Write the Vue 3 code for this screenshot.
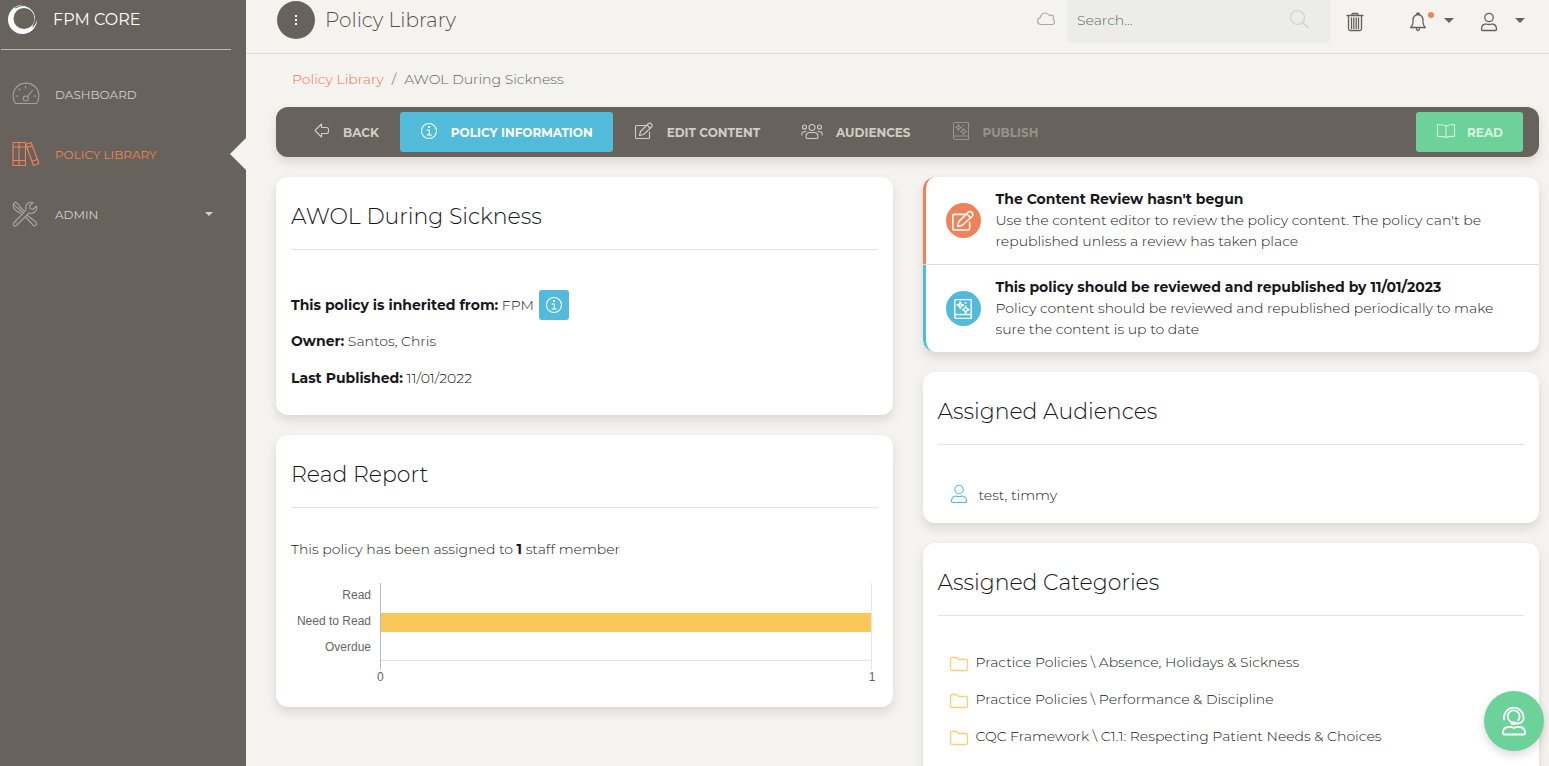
<script setup>
import { h, ref } from 'vue'

const glyphs = {
  gauge: { w: 28, h: 24, d: 'M3.5 21.5C.2 17.500 .5 10.500 3 7C8 -.8 20 -.8 25 7C27.500 10.500 27.800 17.500 24.500 21.500ZM16.300 16.500A2.500 2.500 0 1 1 11.300 16.500A2.500 2.500 0 1 1 16.300 16.500M15.500 14.500L20.500 8.500M13.500 4.200V6M7 7L8 8M4 14H6M22 14H24' },
  books: { w: 28, h: 26, d: 'M1 1.500H13.500V24.500H1ZM7 1.500V24.500M1 6H13.500M1 19.500H13.500M13.800 3.500L19 1.500L27 22.500L21.500 24.500ZM15 6.500L20.500 4.500M19.800 20.500L25.500 18.300' },
  tools: { w: 26, h: 26, d: 'M10.500 11.500L6 7L4.500 6.500L1.500 3L3.500 1L7 4L7.500 5.500L12 10M1.500 3C.5 6 1.500 8 4 9.500L8.500 12.500M15.500 14.500L23.800 21C26 23.500 23 26 21 24L13.500 16M11 12.500L2 21.500C0 24 2.500 26 4.500 24.500L14 15L17 12C22 13.500 25.500 9.500 24.500 5L21 8.500L18 7.500L17.500 5L21 1.500C16 .5 12.500 4 14 9ZM4 22L4.100 22.100' },
  arrow: { w: 16, h: 16, d: 'M1 7.500L7.500 1V4.500H12.500Q14.500 4.500 14.500 6.500V8.500Q14.500 10.500 12.500 10.500H7.500V14Z' },
  info: { w: 18, h: 18, d: 'M16.500 9A7.500 7.500 0 1 1 1.500 9A7.500 7.500 0 1 1 16.500 9M7 8H9.300V13M7 13H11.500M8.500 4.500H9.500V5.500H8.500Z' },
  edit: { w: 20, h: 18, d: 'M12 3.500H2.500Q1.500 3.500 1.500 4.500V15.500Q1.500 16.500 2.500 16.500H14.500Q15.500 16.500 15.500 15.500V10M6.500 9.500L14.500 1.500Q16 .5 17.500 2Q19 3.500 17.500 5L9.500 12.500L5.500 13.500ZM13 3L16.500 6.500' },
  users: { w: 22, h: 16, d: 'M14 4.500A3 3 0 1 1 8 4.500A3 3 0 1 1 14 4.500M6.500 15.500H15.500Q17 15.500 17 14Q17 9.500 13 9.500H9Q5 9.500 5 14Q5 15.500 6.500 15.500ZM5.500 4A2 2 0 1 1 1.500 4A2 2 0 1 1 5.500 4M20.500 4A2 2 0 1 1 16.500 4A2 2 0 1 1 20.500 4M.8 12V11Q.8 8.500 5 8.500M21.200 12V11Q21.200 8.500 17 8.500' },
  book: { w: 18, h: 20, d: 'M16.500 1.500H3Q1.500 1.500 1.500 3V17Q1.500 18.500 3 18.500H16.500ZM1.500 16.500Q1.500 15 3 15H16.500M6.500 3.500L7.300 5.700L9.500 6.500L7.300 7.300L6.500 9.500L5.700 7.300L3.500 6.500L5.700 5.700ZM11.500 7.500L12.500 9.500L14.500 10.500L12.500 11.500L11.500 13.500L10.500 11.500L8.500 10.500L10.500 9.500ZM11 4.500H11.800' },
  open: { w: 20, h: 16, d: 'M10 3Q7 1.500 1.500 1.500V13.500Q7 13 10 14.500Q13 13 18.500 13.500V1.500Q13 1.500 10 3ZM10 3V14.500' },
  cloud: { w: 20, h: 14, d: 'M4.500 12.500H16Q18.500 12.500 18.500 10Q18.500 8 17 7.500Q18 5.500 17.500 4.500Q16 2.500 13.500 3.500Q11.500 .8 8.500 1Q5 1.300 4.500 5.500Q1.500 6 1.500 9Q1.500 12 4.500 12.500Z' },
  search: { w: 20, h: 20, d: 'M15.500 8.500A7 7 0 1 1 1.500 8.500A7 7 0 1 1 15.500 8.500M13.500 13.500L19 18.500' },
  trash: { w: 18, h: 20, d: 'M1 3.500H17M2.500 4V17Q2.500 18.500 4 18.500H14Q15.500 18.500 15.500 17V4M6 3V2Q6 1.500 7 1.500H11Q12 1.500 12 2V3M5.500 6V16.500M7.800 6V16.500M10.200 6V16.500M12.500 6V16.500' },
  bell: { w: 18, h: 20, d: 'M1.500 15.500Q4 14 4 8.500Q4 3 9 2.500Q14 3 14 8.500Q14 14 16.500 15.500ZM7.500 2.500Q7.500 1 9 1Q10.500 1 10.500 2.500M7.500 16.500Q7.500 18.500 9 18.500Q10.500 18.500 10.500 16.500' },
  user: { w: 18, h: 20, d: 'M13.200 5.500A4.200 4.200 0 1 1 4.800 5.500A4.200 4.200 0 1 1 13.200 5.500M2.500 18.500Q1.500 18.500 1.500 17.500Q1.500 12 6 12Q9 13 12 12Q16.500 12 16.500 17.500Q16.500 18.500 15.500 18.500Z' },
  folder: { w: 20, h: 16, d: 'M1.500 3V13Q1.500 14.500 3 14.500H17Q18.500 14.500 18.500 13V5Q18.500 3.500 17 3.500H10L7.500 1.500H3Q1.500 1.500 1.500 3Z' },
  agent: { w: 26, h: 30, d: 'M3 13.500V11.500A9.800 9.800 0 0 1 22.600 11.500Q22.600 17 17 17.500H13.500M9.500 15.500A6 6 0 1 1 17 14.500M10.500 16.500H14V17.800H10.500ZM3.500 28.500H22.500Q24.200 28.500 24.200 26.500Q23.500 21.500 19 21Q15.500 20.500 13 22Q10.500 20.500 7 21Q2.500 21.500 1.800 26.500Q1.800 28.500 3.500 28.500Z' },
}

const Icon = (props) => {
  const g = glyphs[props.name]
  return h('svg', { class: 'icon', width: g.w, height: g.h, viewBox: `0 0 ${g.w} ${g.h}`, 'aria-hidden': 'true' }, [
    h('path', { d: g.d, fill: 'none', stroke: 'currentColor', 'stroke-width': props.weight || 1.1, 'stroke-linejoin': 'round', 'stroke-linecap': 'round' }),
  ])
}
Icon.props = ['name', 'weight']

const query = ref('')

const nav = [
  { icon: 'gauge', label: 'DASHBOARD' },
  { icon: 'books', label: 'POLICY LIBRARY', active: true },
  { icon: 'tools', label: 'ADMIN', menu: true },
]
const actions = [
  { icon: 'arrow', label: 'BACK' },
  { icon: 'info', label: 'POLICY INFORMATION', active: true },
  { icon: 'edit', label: 'EDIT CONTENT' },
  { icon: 'users', label: 'AUDIENCES' },
  { icon: 'book', label: 'PUBLISH', disabled: true },
]
const notices = [
  { tone: 'orange', icon: 'edit', title: "The Content Review hasn't begun", text: "Use the content editor to review the policy content. The policy can't be republished unless a review has taken place" },
  { tone: 'blue', icon: 'book', title: 'This policy should be reviewed and republished by 11/01/2023', text: 'Policy content should be reviewed and republished periodically to make sure the content is up to date' },
]
const report = [
  { label: 'Read', value: 0 },
  { label: 'Need to Read', value: 1 },
  { label: 'Overdue', value: 0 },
]
const categories = [
  'Practice Policies \\ Absence, Holidays & Sickness',
  'Practice Policies \\ Performance & Discipline',
  'CQC Framework \\ C1.1: Respecting Patient Needs & Choices',
  'Practice Policies \\',
]
</script>

<template>
  <div class="shell">
    <aside class="sidebar">
      <div class="brand">
        <svg class="logo" width="32" height="32" viewBox="0 0 32 32" aria-hidden="true">
          <path fill="#fff" fill-rule="evenodd" d="M15 2A14.500 14.500 0 1 0 30 17Q28 23 25 25Q30 17 27 10Q22 3 15 2ZM17 5A10.500 10.500 0 1 1 17 26A10.500 10.500 0 1 1 17 5Z" />
          <path fill="none" stroke="#67625b" stroke-width="1" d="M8 5Q19 -1 26 7Q31 14 26 23" />
        </svg>
        <span>FPM CORE</span>
      </div>
      <nav class="nav">
        <a v-for="n in nav" :key="n.label" href="#" class="nav-item" :class="{ active: n.active }">
          <span class="nav-icon"><Icon :name="n.icon" /></span>
          <span class="nav-label">{{ n.label }}</span>
          <span v-if="n.menu" class="caret"></span>
        </a>
      </nav>
    </aside>

    <div class="page">
      <header class="topbar">
        <button class="more" aria-label="More"><i></i><i></i><i></i></button>
        <h1>Policy Library</h1>
        <Icon name="cloud" class="cloud" />
        <form class="search" @submit.prevent>
          <input v-model="query" type="text" placeholder="Search..." aria-label="Search" />
          <button aria-label="Run search"><Icon name="search" /></button>
        </form>
        <button class="tool trash" aria-label="Recycle bin"><Icon name="trash" weight="1.300" /></button>
        <button class="tool bell" aria-label="Notifications"><Icon name="bell" weight="1.300" /><span class="dot"></span><span class="caret"></span></button>
        <button class="tool account" aria-label="Account"><Icon name="user" weight="1.300" /><span class="caret"></span></button>
      </header>

      <main class="content">
        <nav class="crumbs" aria-label="Breadcrumb">
          <a href="#">Policy Library</a><span>/</span><span>AWOL During Sickness</span>
        </nav>

        <div class="toolbar">
          <button v-for="a in actions" :key="a.label" class="action" :class="{ active: a.active }" :disabled="a.disabled">
            <Icon :name="a.icon" /><span>{{ a.label }}</span>
          </button>
          <button class="action read"><Icon name="open" /><span>READ</span></button>
        </div>

        <div class="columns">
          <div class="column">
            <section class="card">
              <h2>AWOL During Sickness</h2>
              <div class="facts">
                <p class="inherit"><span><strong>This policy is inherited from:</strong> FPM</span>
                  <button class="hint" aria-label="About inheritance"><Icon name="info" /></button></p>
                <p><strong>Owner:</strong> Santos, Chris</p>
                <p><strong>Last Published:</strong> 11/01/2022</p>
              </div>
            </section>
            <section class="card">
              <h2>Read Report</h2>
              <p class="summary">This policy has been assigned to <strong>1</strong> staff member</p>
              <div class="chart">
                <div class="names"><span v-for="r in report" :key="r.label">{{ r.label }}</span></div>
                <div class="plot">
                  <div v-for="r in report" :key="r.label" class="track"><div class="bar" :style="{ width: r.value * 100 + '%' }"></div></div>
                </div>
                <div class="scale"><span>0</span><span>1</span></div>
              </div>
            </section>
          </div>

          <div class="column">
            <section class="notices">
              <article v-for="n in notices" :key="n.icon" class="notice" :class="n.tone">
                <span class="badge"><Icon :name="n.icon" weight="1.300" /></span>
                <p><strong>{{ n.title }}</strong><br />{{ n.text }}</p>
              </article>
            </section>
            <section class="card">
              <h2>Assigned Audiences</h2>
              <ul class="list people"><li><Icon name="user" /><span>test, timmy</span></li></ul>
            </section>
            <section class="card">
              <h2>Assigned Categories</h2>
              <ul class="list folders"><li v-for="c in categories" :key="c"><Icon name="folder" weight="1.300" /><span>{{ c }}</span></li></ul>
            </section>
          </div>
        </div>
      </main>
    </div>
    <button class="support" aria-label="Support"><Icon name="agent" weight="1.800" /></button>
  </div>
</template>

<style>
body { margin: 0; background: #f4f3ef; }
</style>

<style scoped>
* { box-sizing: border-box; }
.shell { display: flex; height: 100vh; overflow: hidden; font: 300 14px/21px Montserrat, Inter, "Open Sans", sans-serif; color: #16181b; background: #f4f3ef; }
button { border: 0; padding: 0; background: none; color: inherit; font: inherit; display: flex; align-items: center; cursor: pointer; }
a { text-decoration: none; color: inherit; }
h1, h2, p, ul { margin: 0; padding: 0; font-weight: 300; }
strong { font-weight: 700; }
.icon { flex: none; display: block; }
.caret { width: 0; height: 0; border: 5px solid transparent; border-top-color: currentColor; border-bottom: 0; }

.sidebar { flex: none; width: 246px; background: #67625b; color: #d4d1ce; }
.brand { display: flex; align-items: center; gap: 14px; height: 50px; margin: 0 15px 0 1px; padding: 0 0 11px 6px; border-bottom: 1px solid #bbb8b3; color: #fff; font-size: 16px; font-weight: 400; }
.nav { padding-top: 14px; }
.nav-item { display: flex; align-items: center; position: relative; height: 60px; padding-left: 12px; padding-right: 33px; font-size: 12px; font-weight: 400; }
.nav-icon { width: 43px; color: #a8a49e; }
.nav-label { flex: 1; }
.nav-item.active, .nav-item.active .nav-icon { color: #f0825a; }
.nav-item.active::after { content: ""; position: absolute; right: 0; top: 14px; border: 16px solid transparent; border-right-color: #f4f3ef; border-left: 0; }
.nav-item .caret { border-width: 4px; border-bottom: 0; }

.page { flex: 1; min-width: 0; }
.topbar { display: flex; align-items: flex-start; height: 54px; padding: 0 24px 0 31px; border-bottom: 1px solid #dfdfdb; color: #67625b; }
.more { flex: none; flex-direction: column; justify-content: center; gap: 2px; width: 38px; height: 38px; margin-top: 1px; border-radius: 50%; background: #67625b; }
.more i { width: 2px; height: 2px; background: #fff; }
.topbar h1 { margin-left: 10px; margin-right: auto; font-size: 20px; line-height: 40px; color: #57524c; }
.cloud { margin: 12px 11px 0 0; color: #aaa8a3; }
.search { display: flex; width: 263px; height: 43px; border-radius: 0 0 4px 4px; background: #ecede8; }
.search input { flex: 1; min-width: 0; height: 40px; border: 0; outline: 0; padding: 0 10px; background: none; font: inherit; color: #67625b; }
.search input::placeholder { color: #5c656d; opacity: 1; }
.search button { height: 38px; padding: 0 21px; color: #cfcfcb; }
.tool { height: 43px; }
.trash { margin-left: 16px; }
.bell { position: relative; margin-left: 45px; }
.bell .caret { margin-left: 17px; }
.dot { position: absolute; left: 19px; top: 12px; width: 6px; height: 6px; border-radius: 50%; background: #f0825a; }
.account { margin-left: 26px; }
.account .caret { margin-left: 17px; }
.tool .caret { margin-bottom: 3px; }

.content { padding: 15px 10px 0 30px; }
.crumbs { display: flex; gap: 8px; padding: 0 16px; height: 38px; line-height: 20px; color: #5c656d; }
.crumbs a { color: #f0754a; }
.toolbar { display: flex; align-items: center; gap: 1px; height: 50px; padding: 0 16px 0 18px; border-radius: 12px; background: #67625b; box-shadow: 0 5px 10px rgba(80, 60, 50, 0.15); }
.action { gap: 13px; height: 40px; padding: 0 20px; border-radius: 3px; color: #d0cdc9; font-size: 12px; font-weight: 700; }
.action .icon { margin-bottom: 2px; }
.action.active { background: #51bbd9; color: #fff; }
.action:disabled { color: #96928d; cursor: default; }
.action.read { gap: 11px; margin-left: auto; background: #6dd19a; color: #d3f3e0; }

.columns { display: grid; grid-template-columns: 1fr 1fr; gap: 30px; margin-top: 20px; align-items: start; }
.column { display: grid; gap: 20px; }
.card { padding: 21px 15px 26px; border-radius: 12px; background: #fff; box-shadow: 0 5px 10px rgba(80, 70, 60, 0.15); }
.card h2 { padding-bottom: 14px; border-bottom: 1px solid #e2e2e2; font-size: 22px; line-height: 37px; }
.facts { display: grid; gap: 16px; padding-top: 40px; }
.inherit { display: flex; align-items: center; gap: 5px; height: 30px; margin-bottom: -5px; }
.hint { justify-content: center; width: 30px; height: 30px; border-radius: 3px; background: #51bbd9; color: #fff; }

.summary { margin-top: 31px; }
.chart { display: grid; grid-template-columns: 80px 1fr; column-gap: 9px; margin: 23px 6px 0 0; font: 12px/14px "Liberation Sans", Arial, sans-serif; color: #666; }
.names { display: grid; grid-template-rows: repeat(3, 26px); text-align: right; align-items: center; height: 78px; margin-top: -1px; }
.plot { position: relative; height: 78px; border: 1px solid #e5e5e5; border-top: 0; border-left-color: #bbb; }
.plot::before, .plot::after { content: ""; position: absolute; top: 100%; left: -1px; width: 1px; height: 10px; background: #bbb; }
.plot::after { left: auto; right: -1px; background: #e5e5e5; }
.track { display: flex; align-items: center; height: 26px; }
.bar { height: 19px; background: #fac75a; }
.scale { grid-column: 2; display: flex; justify-content: space-between; margin: 9px -4px -3px -3px; }

.notices { border-radius: 12px; overflow: hidden; background: #fff; box-shadow: 0 5px 10px rgba(80, 70, 60, 0.15); }
.notice { display: flex; align-items: center; gap: 15px; padding: 12px 30px 12px 20px; border-left: 3px solid; }
.notice:first-child { border-top-left-radius: 12px; }
.notice:last-child { border-bottom-left-radius: 12px; }
.notice + .notice { box-shadow: 0 -1px #dcdcdc; margin-top: 1px; }
.notice.orange { border-left-color: #f0825a; }
.notice.blue { border-left-color: #51bbd9; }
.badge { flex: none; display: flex; align-items: center; justify-content: center; width: 35px; height: 35px; border-radius: 50%; color: #fff; }
.orange .badge { background: #f0825a; }
.blue .badge { background: #51bbd9; }
.notice .badge .icon { width: 24px; height: 22px; }

.list { list-style: none; display: grid; gap: 16px; }
.list li { display: flex; align-items: center; }
.people { padding: 40px 12px 0; margin-bottom: -9px; }
.people li { gap: 11px; }
.people .icon { color: #51bbd9; margin-bottom: 4px; }
.people li { height: 21px; }
.folders { padding: 36px 11px 0; }
.folders li { gap: 7px; }
.folders .icon { color: #fbcf76; margin-top: 3px; }

.support { position: fixed; right: 5px; bottom: 15px; width: 60px; height: 60px; justify-content: center; border-radius: 50%; background: #6dd19a; color: #fff; box-shadow: 0 4px 10px rgba(0, 0, 0, 0.15); }
</style>
